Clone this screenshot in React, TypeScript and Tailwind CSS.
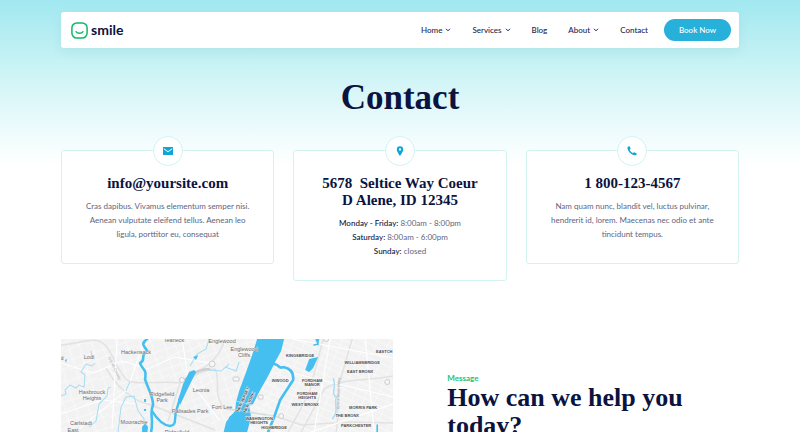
import type { ReactNode } from "react";

const serif = "font-['Liberation_Serif',serif] font-bold text-[#0b1340]";

function Caret() {
  return (
    <svg viewBox="0 0 6 4" className="h-1 w-1.5" fill="none" stroke="currentColor" strokeWidth="1" aria-hidden="true">
      <path d="M1 .8 3 2.8 5 .8" />
    </svg>
  );
}

function Logo() {
  return (
    <a href="#" className="flex items-center gap-[3px]">
      <svg viewBox="0 0 17 17" className="size-[17px]" fill="none" stroke="#12b76a" aria-hidden="true">
        <rect x=".9" y=".9" width="15.2" height="15.2" rx="5" strokeWidth="1.5" />
        <path d="M5 9.600C6.300 11.800 10.700 11.800 12 9.600" strokeWidth="1.300" strokeLinecap="round" />
      </svg>
      <span className="text-sm leading-4 font-bold text-[#0b1340]">smile</span>
    </a>
  );
}

const nav = [
  { label: "Home", menu: true },
  { label: "Services", menu: true },
  { label: "Blog", menu: false },
  { label: "About", menu: true },
  { label: "Contact", menu: false },
];

function Header() {
  return (
    <header className="flex h-9 items-center justify-between rounded-[3px] bg-white pr-2 pl-2.5 shadow-[0_4px_12px_rgba(20,120,140,0.08)]">
      <Logo />
      <div className="flex items-center gap-4">
        <nav className="flex items-center gap-[21px] text-[8px] font-medium text-[#1b2450]">
          {nav.map((item) => (
            <a key={item.label} href="#" className="flex items-center gap-[3px]">
              {item.label}
              {item.menu && <Caret />}
            </a>
          ))}
        </nav>
        <button className="h-[22px] w-[67px] rounded-full bg-[#26b0da] text-[8px] font-medium text-white">Book Now</button>
      </div>
    </header>
  );
}

function Card({ icon, title, children }: { icon: ReactNode; title: ReactNode; children: ReactNode }) {
  return (
    <article className="relative rounded-[3px] border border-[#d3f3f3] bg-white px-4 pt-6 pb-[22px] text-center">
      <span className="absolute -top-[15px] left-1/2 flex size-[30px] -translate-x-1/2 items-center justify-center rounded-full border border-[#d3f3f3] bg-white">
        <svg viewBox="0 0 10 10" className="size-2.5" fill="#0ea5d8" aria-hidden="true">
          {icon}
        </svg>
      </span>
      <h2 className={`${serif} text-[15px] leading-[17px]`}>{title}</h2>
      <div className="mt-[7px] text-[8px] leading-[14px] text-[#5d6580]">{children}</div>
    </article>
  );
}

function Cards() {
  return (
    <section className="mt-8 grid grid-cols-3 items-start gap-[19px]">
      <Card icon={<path fillRule="evenodd" d="M0 1h10v8H0zM.8 2.300 5 5.300 9.200 2.300V3.300L5 6.300 .8 3.300z" />} title="info@yoursite.com">
        <p>
          Cras dapibus. Vivamus elementum semper nisi.
          <br />
          Aenean vulputate eleifend tellus. Aenean leo
          <br />
          ligula, porttitor eu, consequat
        </p>
      </Card>
      <Card
        icon={<path fillRule="evenodd" d="M5 .2A3.200 3.200 0 0 0 1.800 3.400C1.800 5.800 5 9.900 5 9.900S8.200 5.800 8.200 3.400A3.200 3.200 0 0 0 5 .2M5 2.200A1.200 1.200 0 1 1 5 4.600 1.200 1.200 0 0 1 5 2.200" />}
        title={
          <>
            5678&nbsp; Seltice Way Coeur
            <br />D Alene, ID 12345
          </>
        }
      >
        {[
          ["Monday - Friday:", "8:00am - 8:00pm"],
          ["Saturday:", "8:00am - 6:00pm"],
          ["Sunday:", "closed"],
        ].map(([day, hours]) => (
          <p key={day}>
            <strong className="font-medium text-[#0b1340]">{day}</strong> {hours}
          </p>
        ))}
      </Card>
      <Card
        icon={<path d="M1.300 .5 2.700 .3 3.600 2.800 2.600 3.700C3.300 5.200 4.400 6.300 5.900 7L7.100 6.200 9.700 7.400 9.300 8.900C8.800 9.400 7.500 9.500 6.500 9.100 3.500 8 1.300 5.500 .5 2.800 .3 1.800 .6 .9 1.300 .5Z" />}
        title="1 800-123-4567"
      >
        <p>
          Nam quam nunc, blandit vel, luctus pulvinar,
          <br />
          hendrerit id, lorem. Maecenas nec odio et ante
          <br />
          tincidunt tempus.
        </p>
      </Card>
    </section>
  );
}

const towns: [string, number, number][] = [
  ["Teaneck", 113, 3],
  ["Hackensack", 75, 15],
  ["Englewood", 161, 4],
  ["Lodi", 28, 20],
  ["Hasbrouck", 31, 55],
  ["Heights", 31, 61],
  ["Ridgefield", 101, 57],
  ["Park", 101, 63],
  ["Leonia", 140, 53],
  ["Palisades Park", 129, 74],
  ["Fort Lee", 161, 70],
  ["Carlstadt", 20, 86],
  ["East", 12, 93],
  ["Moonachie", 73, 85],
  ["Ridgefield", 116, 95],
  ["Englewood", 183, 12],
  ["Cliffs", 183, 18],
];

const districts: [string, number, number][] = [
  ["KINGSBRIDGE", 239, 18],
  ["EASTCH", 323, 14],
  ["WILLIAMSBRIDGE", 301, 25],
  ["EAST BRONX", 299, 34],
  ["INWOOD", 219, 43],
  ["FORDHAM", 251, 43],
  ["MANOR", 251, 47],
  ["FORDHAM", 246, 56],
  ["HEIGHTS", 246, 60],
  ["WEST BRONX", 244, 67],
  ["MORRIS PARK", 302, 70],
  ["THE BRONX", 286, 78],
  ["PARKCHESTER", 295, 88],
  ["WASHINGTON", 198, 81],
  ["HEIGHTS", 198, 85],
  ["HIGHBRIDGE", 213, 90],
];

function Map() {
  return (
    <svg viewBox="0 0 332 240" className="w-full font-['Liberation_Sans',sans-serif]" role="img" aria-label="Map">
      <defs>
        <pattern id="streets" width="23" height="19" patternUnits="userSpaceOnUse" patternTransform="rotate(-18)">
          <path d="M0 4H23M0 13L23 10M5 0V19M14 0L16 19" stroke="#fafafa" strokeWidth=".8" fill="none" />
        </pattern>
        <pattern id="blocks" width="11" height="13" patternUnits="userSpaceOnUse" patternTransform="rotate(24)">
          <path d="M0 3H11M0 9H11M4 0V13" stroke="#fafafa" strokeWidth=".8" fill="none" />
        </pattern>
      </defs>
      <rect width="332" height="240" fill="#f2f2f3" />
      <rect width="220" height="240" fill="url(#streets)" />
      <rect x="190" width="142" height="240" fill="url(#blocks)" />
      <g fill="none" stroke="#e2e2e2" strokeWidth="1.500">
        <path d="M0 6C16 5 30 -1 38 2 51 7 54 30 66 41 77 47 100 41 119 44 132 38 140 31 154 30 160 41 151 57 164 70L214 77 240 86 290 83 332 84" />
        <path d="M45 29C55 47 71 62 90 66L154 91M119 44 107 82M164 0C158 20 145 29 133 34M227 93 248 54 262 0M275 93C279 66 274 54 280 38L291 0M332 37C307 42 280 39 263 50L240 93" />
      </g>
      <path d="M119 42C133 38 132 30 149 30" stroke="#cfcfcf" strokeWidth="2.400" fill="none" />
      <g fill="none" stroke="#fff" strokeWidth="1.100">
        <path d="M0 24 32 34 61 22 87 30 113 18 149 24M0 75 41 61 76 65M14 93 66 51 84 0M121 0 127 39 158 81M56 0 51 90M231 0 332 19M227 33 332 58M250 93 332 65M304 0 313 93M269 0 253 93" />
      </g>
      <g fill="none" stroke="#a5dcf3" strokeWidth="1">
        <path d="M0 57 5 55 4 51 9 46 15 49 18 46 23 48 24 36 20 33 25 25 31 27 34 24M28 88 35 82 38 65 46 57 47 49 50 48M57 93 60 68 65 58 73 57 77 72 83 80 86 93M129 27 136 15 145 10 148 0M148 31 160 32 168 25M65 52 69 42M31 20 30 12M164 28 175 32 178 23" />
        <path d="M272 39C276 48 269 54 275 58 273 68 278 72 271 80" strokeWidth="1.400" />
      </g>
      <g fill="none" stroke="#44bff0" strokeLinecap="round" strokeLinejoin="round">
        <path d="M86 0C78 6 85 8 86 12 78 18 86 20 79 24 81 31 86 29 84 40 86 48 92 56 92 66 88 74 93 80 90 93" strokeWidth="2.600" />
        <path d="M91 72C96 80 101 86 109 87 116 86 113 80 115 72L119 59" strokeWidth="2.400" />
        <path d="M212 25C218 24 217 31 222 28 228 29 233 32 232 41L219 61 213 78 207 93" strokeWidth="2.600" />
        <path d="M316 86V93M253 6 257 5" strokeWidth="1.600" />
      </g>
      <g fill="#44bff0">
        <path d="M196 0H223L220 12 214 23 207 37 198 53 192 65 188 67 190 78 186 93 180 120H156L165 83 174 72 175 63 178 52 185 33 191 16Z" />
        <path d="M128 33 133 31 135 33 128 47 119 66 117 61 122 45ZM248 20 257 18 252 29 248 33 244 31ZM81 88 84 84 87 88 86 95 81 95ZM254 0H258L257 7ZM168 78 164 93H168L174 73ZM132 18 137 16 135 21ZM83 60H85V63H83ZM83 70H85V72H83ZM4 21 6 20 5 24Z" />
        <circle cx="1" cy="20" r="1" />
      </g>
      <path d="M164 69 205 76M175 62 192 66" stroke="#c9dce3" strokeWidth=".8" />
      <g fill="#f6f6f6" stroke="#c4c4c4" strokeWidth=".8">
        <circle cx="151" cy="25" r="3" />
        <circle cx="121" cy="41" r="2.500" />
        <circle cx="326" cy="43" r="2.500" />
        <circle cx="220" cy="77" r="2.500" />
        <circle cx="265" cy="0" r="2.500" />
        <rect x="172" y="38" width="6" height="4" rx="1" />
        <rect x="197" y="56" width="5" height="4" rx="1" />
      </g>
      <g fill="#ababab" fontSize="4">
        <text transform="translate(47 19) rotate(64)">US 46 County</text>
        <text transform="translate(278 70) rotate(-88)">Bronx River Pkwy</text>
      </g>
      <g fill="#6c6c6c" fontSize="5.500" textAnchor="middle" stroke="#f6f6f6" strokeWidth=".6" paintOrder="stroke">
        {towns.map(([name, x, y]) => (
          <text key={`${name}-${y}`} x={x} y={y}>
            {name}
          </text>
        ))}
        <text x="1" y="21">d</text>
      </g>
      <g fill="#4f4f4f" fontSize="4" fontWeight="bold" textAnchor="middle" stroke="#f6f6f6" strokeWidth=".8" paintOrder="stroke">
        {districts.map(([name, x, y]) => (
          <text key={`${name}-${x}-${y}`} x={x} y={y}>
            {name}
          </text>
        ))}
        <text transform="translate(183 61) rotate(-66)">NEW JERSEY</text>
        <text transform="translate(189 64) rotate(-66)">NEW YORK</text>
      </g>
    </svg>
  );
}

export default function App() {
  return (
    <div className="h-screen overflow-hidden bg-white bg-[linear-gradient(#a1e8f0_0px,#c5f2f4_60px,#e6f9fb_115px,#ffffff_165px)] px-[61px] pt-3 font-[Lato,sans-serif]">
      <Header />
      <main>
        <h1 className={`${serif} mt-[30px] text-center text-[35px] leading-10`}>Contact</h1>
        <Cards />
        <section className="mt-[58px] grid grid-cols-[49fr_51fr] items-start">
          <Map />
          <div className="pt-[33px] pl-[54px]">
            <p className="text-[8px] leading-3 font-bold text-[#17c37b]">Message</p>
            <h2 className={`${serif} text-[26px] leading-7`}>
              How can we help you
              <br />
              today?
            </h2>
          </div>
        </section>
      </main>
    </div>
  );
}
